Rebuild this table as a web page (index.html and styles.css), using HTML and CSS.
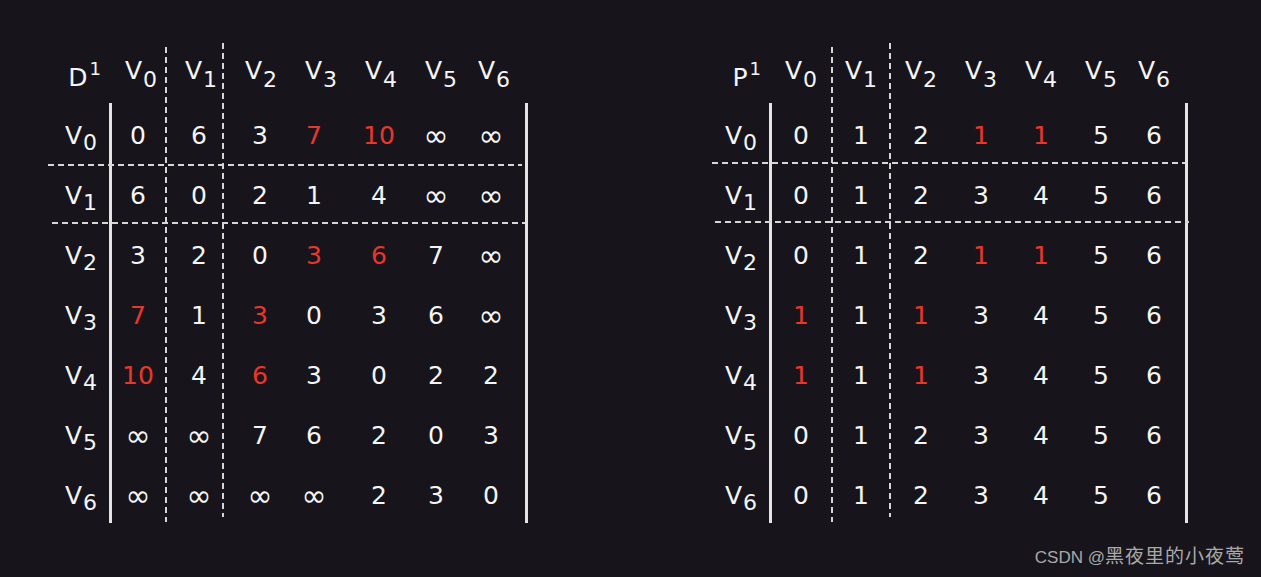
FILE: index.html
```html
<!DOCTYPE html>
<html lang="zh">
<head>
<meta charset="utf-8">
<title>Floyd D1 / P1</title>
<link rel="stylesheet" href="styles.css">
</head>
<body>
<main class="page">
  <section class="matrix matrix-d">
    <div class="head">
      <div class="corner"><span class="big">D</span><span class="sup">1</span></div>
      <div class="cell">V<sub>0</sub></div>
      <div class="cell">V<sub>1</sub></div>
      <div class="cell">V<sub>2</sub></div>
      <div class="cell">V<sub>3</sub></div>
      <div class="cell">V<sub>4</sub></div>
      <div class="cell">V<sub>5</sub></div>
      <div class="cell">V<sub>6</sub></div>
    </div>
    <div class="body">
      <div class="label"><span class="v">V</span><sub>0</sub></div>
      <div class="cell">0</div><div class="cell">6</div><div class="cell">3</div><div class="cell red">7</div><div class="cell red">10</div><div class="cell inf">∞</div><div class="cell inf">∞</div>
      <div class="label"><span class="v">V</span><sub>1</sub></div>
      <div class="cell">6</div><div class="cell">0</div><div class="cell">2</div><div class="cell">1</div><div class="cell">4</div><div class="cell inf">∞</div><div class="cell inf">∞</div>
      <div class="label"><span class="v">V</span><sub>2</sub></div>
      <div class="cell">3</div><div class="cell">2</div><div class="cell">0</div><div class="cell red">3</div><div class="cell red">6</div><div class="cell">7</div><div class="cell inf">∞</div>
      <div class="label"><span class="v">V</span><sub>3</sub></div>
      <div class="cell red">7</div><div class="cell">1</div><div class="cell red">3</div><div class="cell">0</div><div class="cell">3</div><div class="cell">6</div><div class="cell inf">∞</div>
      <div class="label"><span class="v">V</span><sub>4</sub></div>
      <div class="cell red">10</div><div class="cell">4</div><div class="cell red">6</div><div class="cell">3</div><div class="cell">0</div><div class="cell">2</div><div class="cell">2</div>
      <div class="label"><span class="v">V</span><sub>5</sub></div>
      <div class="cell inf">∞</div><div class="cell inf">∞</div><div class="cell">7</div><div class="cell">6</div><div class="cell">2</div><div class="cell">0</div><div class="cell">3</div>
      <div class="label"><span class="v">V</span><sub>6</sub></div>
      <div class="cell inf">∞</div><div class="cell inf">∞</div><div class="cell inf">∞</div><div class="cell inf">∞</div><div class="cell">2</div><div class="cell">3</div><div class="cell">0</div>
    </div>
    <span class="rule solid solid-left"></span>
    <span class="rule solid solid-right"></span>
    <span class="rule vdash vdash-1"></span>
    <span class="rule vdash vdash-2"></span>
    <span class="rule hdash hdash-1"></span>
    <span class="rule hdash hdash-2"></span>
  </section>

  <section class="matrix matrix-p">
    <div class="head">
      <div class="corner"><span class="big">P</span><span class="sup">1</span></div>
      <div class="cell">V<sub>0</sub></div>
      <div class="cell">V<sub>1</sub></div>
      <div class="cell">V<sub>2</sub></div>
      <div class="cell">V<sub>3</sub></div>
      <div class="cell">V<sub>4</sub></div>
      <div class="cell">V<sub>5</sub></div>
      <div class="cell">V<sub>6</sub></div>
    </div>
    <div class="body">
      <div class="label"><span class="v">V</span><sub>0</sub></div>
      <div class="cell">0</div><div class="cell">1</div><div class="cell">2</div><div class="cell red">1</div><div class="cell red">1</div><div class="cell">5</div><div class="cell">6</div>
      <div class="label"><span class="v">V</span><sub>1</sub></div>
      <div class="cell">0</div><div class="cell">1</div><div class="cell">2</div><div class="cell">3</div><div class="cell">4</div><div class="cell">5</div><div class="cell">6</div>
      <div class="label"><span class="v">V</span><sub>2</sub></div>
      <div class="cell">0</div><div class="cell">1</div><div class="cell">2</div><div class="cell red">1</div><div class="cell red">1</div><div class="cell">5</div><div class="cell">6</div>
      <div class="label"><span class="v">V</span><sub>3</sub></div>
      <div class="cell red">1</div><div class="cell">1</div><div class="cell red">1</div><div class="cell">3</div><div class="cell">4</div><div class="cell">5</div><div class="cell">6</div>
      <div class="label"><span class="v">V</span><sub>4</sub></div>
      <div class="cell red">1</div><div class="cell">1</div><div class="cell red">1</div><div class="cell">3</div><div class="cell">4</div><div class="cell">5</div><div class="cell">6</div>
      <div class="label"><span class="v">V</span><sub>5</sub></div>
      <div class="cell">0</div><div class="cell">1</div><div class="cell">2</div><div class="cell">3</div><div class="cell">4</div><div class="cell">5</div><div class="cell">6</div>
      <div class="label"><span class="v">V</span><sub>6</sub></div>
      <div class="cell">0</div><div class="cell">1</div><div class="cell">2</div><div class="cell">3</div><div class="cell">4</div><div class="cell">5</div><div class="cell">6</div>
    </div>
    <span class="rule solid solid-left"></span>
    <span class="rule solid solid-right"></span>
    <span class="rule vdash vdash-1"></span>
    <span class="rule vdash vdash-2"></span>
    <span class="rule hdash hdash-1"></span>
    <span class="rule hdash hdash-2"></span>
  </section>

  <footer class="mark"><span class="mark-latin">CSDN @</span><span class="mark-cjk">黑夜里的小夜莺</span></footer>
</main>
</body>
</html>
```

FILE: styles.css
```css
html, body {
  margin: 0;
  padding: 0;
  background: #17151b;
}

.page {
  position: relative;
  width: 1261px;
  height: 577px;
  box-sizing: border-box;
  padding: 41px 0 0 40px;
  display: flex;
  gap: 160px;
  align-items: flex-start;
  font-family: "DejaVu Sans", "Open Sans", sans-serif;
  color: #f5f5f5;
  overflow: hidden;
}

.matrix {
  position: relative;
  width: 500px;
  height: 490px;
}

.head,
.body {
  display: grid;
  grid-template-columns: 71px repeat(6, 60px) 46px;
  font-size: 25px;
  line-height: 60px;
}

.head {
  height: 60px;
}

.body {
  margin-top: 5px;
  grid-auto-rows: 60px;
}

.matrix-d .body {
  grid-template-columns: 71px 54px 68px 54px 54px 76px 38px 72px;
}

.cell {
  text-align: center;
  white-space: nowrap;
}

.head .cell sub {
  font-size: 22px;
  vertical-align: -8px;
  line-height: 0;
  margin-left: 1px;
}

.corner {
  text-align: right;
  padding-right: 10px;
  white-space: nowrap;
}

.corner .big {
  vertical-align: -7px;
}

.corner .sup {
  font-size: 18px;
  vertical-align: 4px;
  margin-left: 2px;
  line-height: 0;
}

.label {
  text-align: right;
  padding-right: 14px;
  white-space: nowrap;
}

.label .v {
  vertical-align: 3px;
}

.label sub {
  font-size: 22px;
  vertical-align: -3px;
  line-height: 0;
  margin-left: 1px;
}

.red {
  color: #e8372b;
}

.inf {
  font-size: 30px;
}

.rule {
  position: absolute;
  display: block;
}

.solid {
  width: 3px;
  background: #e4e4e4;
  top: 62px;
  height: 420px;
}

.solid-left {
  left: 69px;
}

.solid-right {
  left: 485px;
}

.vdash {
  width: 1.5px;
  background: repeating-linear-gradient(to bottom, #d6d6d6 0 6px, transparent 6px 10px);
}

.vdash-1 {
  left: 125px;
  top: 6px;
  height: 475px;
}

.vdash-2 {
  left: 182px;
  top: 2px;
  height: 474px;
}

.matrix-p .vdash-1 {
  left: 131px;
}

.matrix-p .vdash-2 {
  left: 189px;
}

.hdash {
  height: 1.5px;
  background: repeating-linear-gradient(to right, #d6d6d6 0 6px, transparent 6px 10px);
}

.hdash-1 {
  top: 123px;
  left: 8px;
  width: 474px;
}

.hdash-2 {
  top: 181px;
  left: 12px;
  width: 473px;
}

.matrix-p .hdash-1 {
  top: 121px;
  left: 12px;
  width: 473px;
}

.matrix-p .hdash-2 {
  top: 180px;
  left: 15px;
  width: 474px;
}

.mark {
  position: absolute;
  right: 16px;
  bottom: 7px;
  color: #a9a9a9;
  white-space: nowrap;
  line-height: 24px;
}

.mark-latin {
  font-family: "Liberation Sans", Arial, sans-serif;
  font-size: 17px;
}

.mark-cjk {
  font-family: "Noto Sans CJK SC", sans-serif;
  font-size: 19px;
  letter-spacing: 1px;
}
```
